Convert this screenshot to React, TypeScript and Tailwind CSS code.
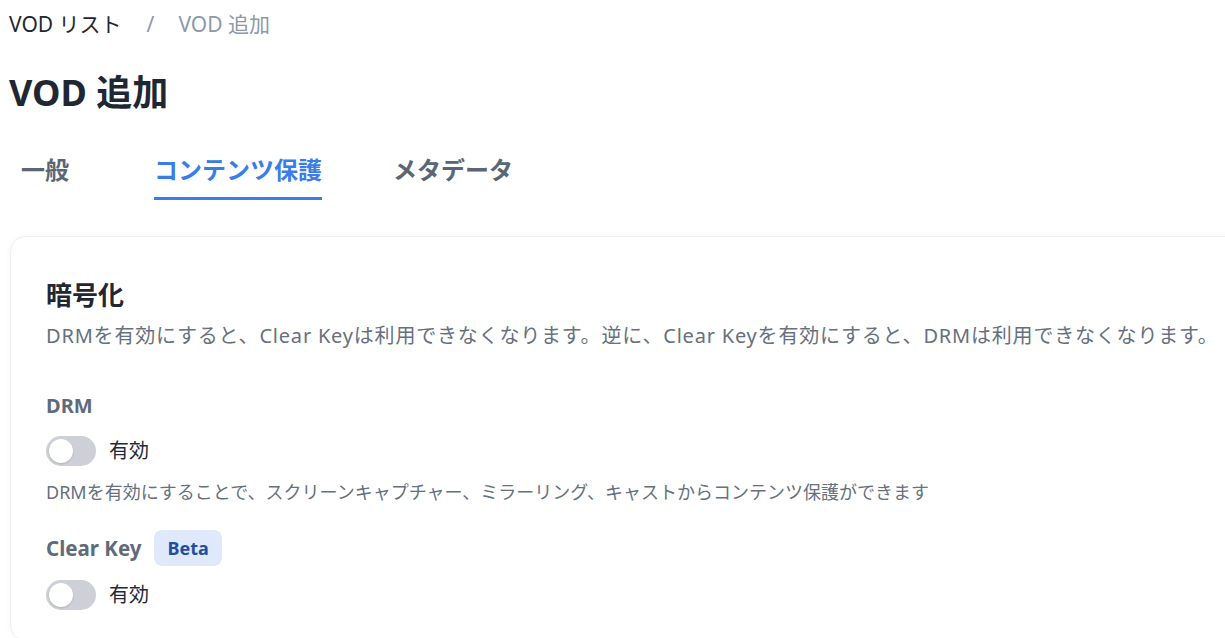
import React from "react";

function Toggle() {
  return (
    <div className="relative h-[30px] w-[50px] shrink-0 rounded-full bg-[#cdd0d6]">
      <div className="absolute left-[3px] top-[3px] h-[24px] w-[24px] rounded-full bg-white shadow-[0_1px_2px_rgba(0,0,0,0.15)]" />
    </div>
  );
}

function Switch({ label }: { label: string }) {
  return (
    <div className="flex h-[30px] items-center gap-[13px]">
      <Toggle />
      <span className="text-[20px] leading-[30px] text-[#222a35]">{label}</span>
    </div>
  );
}

export default function App() {
  const font = { fontFamily: '"Noto Sans", "Noto Sans CJK JP", sans-serif' };
  return (
    <div className="h-[638px] w-full overflow-hidden bg-white pl-[9px]" style={font}>
      <nav className="flex h-[48px] items-center text-[21px] leading-[28px]">
        <span className="text-[#1f2733]">VOD リスト</span>
        <span className="ml-[25px] mr-[24px] text-[#8d99a8]">/</span>
        <span className="text-[#8d99a8]">VOD 追加</span>
      </nav>

      <h1 className="mt-[22px] text-[36px] font-bold leading-[46px] text-[#1f2733]">VOD 追加</h1>

      <div className="mt-[38px] flex text-[24px] font-bold leading-[32px]">
        <div className="ml-[12px] border-b-[3px] border-transparent pb-[11px] text-[#5b6675]">一般</div>
        <div className="ml-[85px] border-b-[3px] border-[#3b7de8] pb-[11px] text-[#3b7de8]">コンテンツ保護</div>
        <div className="ml-[71px] border-b-[3px] border-transparent pb-[11px] text-[#5b6675]">メタデータ</div>
      </div>

      <section className="ml-[1px] mt-[36px] w-[1260px] rounded-[16px] border border-[#efefef] bg-white pb-[30px] pl-[35px] pt-[40px] shadow-[0_0_6px_rgba(0,0,0,0.04)]">
        <h2 className="text-[26px] font-bold leading-[36px] text-[#1f2733]">暗号化</h2>
        <p className="mt-[8px] text-[20px] leading-[30px] tracking-[0.8px] text-[#66707e]">
          DRMを有効にすると、Clear Keyは利用できなくなります。逆に、Clear Keyを有効にすると、DRMは利用できなくなります。
        </p>

        <div className="mt-[40px] text-[20px] font-bold leading-[30px] text-[#5f6b7a]">DRM</div>
        <div className="mt-[15px]">
          <Switch label="有効" />
        </div>
        <p className="mt-[13px] text-[18px] leading-[26px] text-[#66707e]">
          DRMを有効にすることで、スクリーンキャプチャー、ミラーリング、キャストからコンテンツ保護ができます
        </p>

        <div className="mt-[25px] flex h-[36px] items-center gap-[13px]">
          <span className="text-[20.5px] font-bold leading-[30px] text-[#5f6b7a]">Clear Key</span>
          <span className="flex h-[36px] items-center rounded-[8px] bg-[#dfe9fb] px-[13px] text-[18px] font-bold text-[#1f4fa0]">
            Beta
          </span>
        </div>
        <div className="mt-[14px]">
          <Switch label="有効" />
        </div>
      </section>
    </div>
  );
}
